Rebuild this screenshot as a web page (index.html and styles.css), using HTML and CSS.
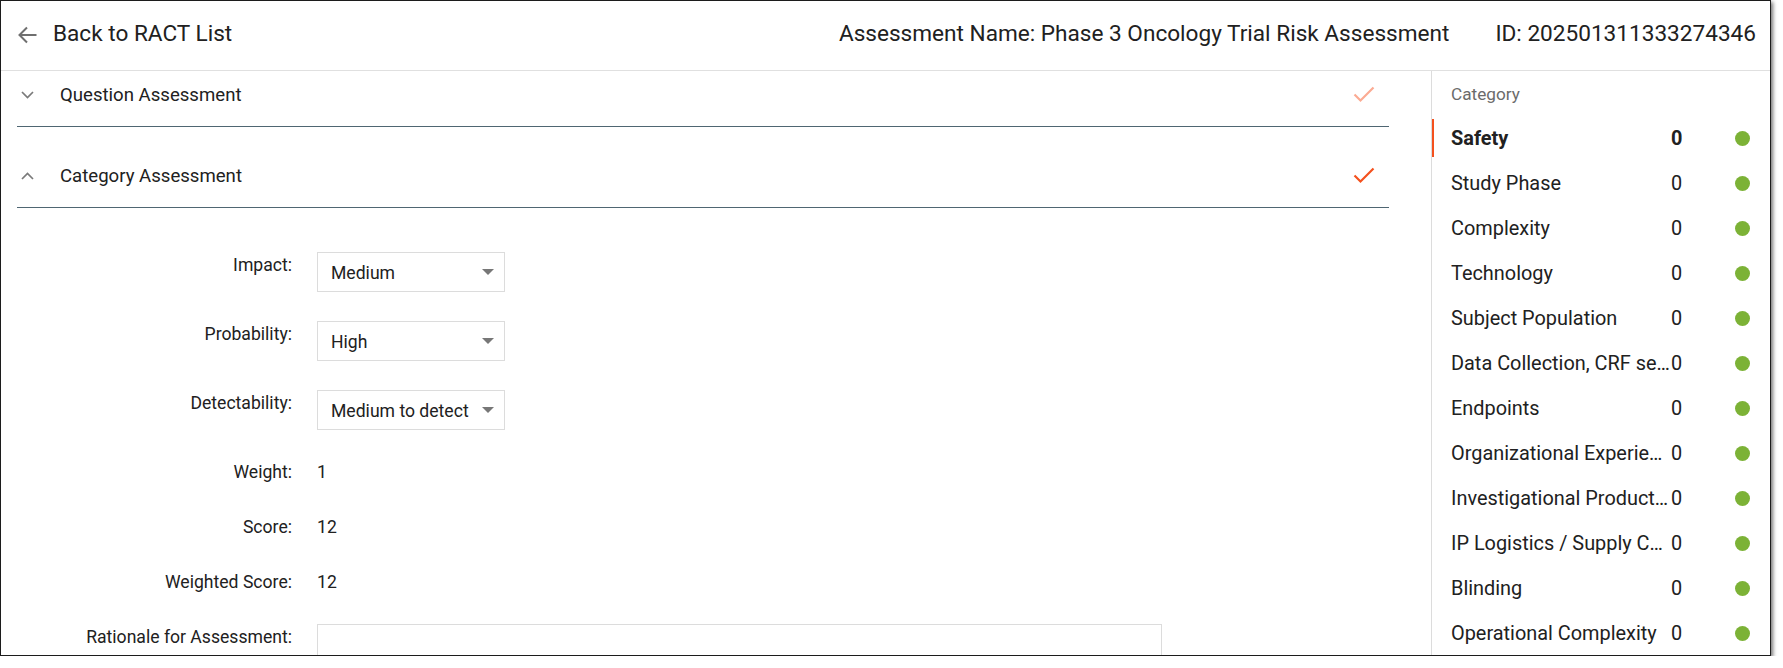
FILE: index.html
```html
<!DOCTYPE html>
<html>
<head>
<meta charset="utf-8">
<title>RACT Assessment</title>
<link rel="stylesheet" href="styles.css">
</head>
<body>
<div class="window">
  <div class="topbar">
    <a class="back">
      <svg class="back-icon" width="20" height="18" viewBox="0 0 20 18"><path d="M19.5 9H2.5M10 1.5L2.5 9L10 16.5" fill="none" stroke="#6f6f6f" stroke-width="2"/></svg>
      <span>Back to RACT List</span>
    </a>
    <div class="meta">
      <span>Assessment Name: Phase 3 Oncology Trial Risk Assessment</span>
      <span>ID: 202501311333274346</span>
    </div>
  </div>

  <div class="main">
    <div class="content">
      <div class="acc">
        <div class="acc-head">
          <svg class="chev" width="13" height="8" viewBox="0 0 13 8"><polyline points="1,1 6.5,6.5 12,1" fill="none" stroke="#7a7a7a" stroke-width="1.7"/></svg>
          <span class="acc-title">Question Assessment</span>
          <svg class="check" width="22" height="17" viewBox="0 0 22 17"><polyline points="1.5,8.5 7.5,14.5 20.5,1.5" fill="none" stroke="#fbab93" stroke-width="2.2"/></svg>
        </div>
      </div>

      <div class="acc open">
        <div class="acc-head">
          <svg class="chev" width="13" height="8" viewBox="0 0 13 8"><polyline points="1,7 6.5,1.5 12,7" fill="none" stroke="#7a7a7a" stroke-width="1.7"/></svg>
          <span class="acc-title">Category Assessment</span>
          <svg class="check" width="22" height="17" viewBox="0 0 22 17"><polyline points="1.5,8.5 7.5,14.5 20.5,1.5" fill="none" stroke="#f4511e" stroke-width="2.2"/></svg>
        </div>
        <div class="acc-body">
          <div class="field">
            <label>Impact:</label>
            <div class="select"><span>Medium</span><i class="caret"></i></div>
          </div>
          <div class="field">
            <label>Probability:</label>
            <div class="select"><span>High</span><i class="caret"></i></div>
          </div>
          <div class="field">
            <label>Detectability:</label>
            <div class="select"><span>Medium to detect</span><i class="caret"></i></div>
          </div>
          <div class="field">
            <label>Weight:</label>
            <div class="value">1</div>
          </div>
          <div class="field">
            <label>Score:</label>
            <div class="value">12</div>
          </div>
          <div class="field">
            <label>Weighted Score:</label>
            <div class="value">12</div>
          </div>
          <div class="field">
            <label>Rationale for Assessment:</label>
            <div class="textarea"></div>
          </div>
        </div>
      </div>
    </div>

    <div class="sidebar">
      <div class="side-title">Category</div>
      <div class="cat active"><span class="cat-name">Safety</span><span class="cat-num">0</span><i class="dot"></i></div>
      <div class="cat"><span class="cat-name">Study Phase</span><span class="cat-num">0</span><i class="dot"></i></div>
      <div class="cat"><span class="cat-name">Complexity</span><span class="cat-num">0</span><i class="dot"></i></div>
      <div class="cat"><span class="cat-name">Technology</span><span class="cat-num">0</span><i class="dot"></i></div>
      <div class="cat"><span class="cat-name">Subject Population</span><span class="cat-num">0</span><i class="dot"></i></div>
      <div class="cat"><span class="cat-name">Data Collection, CRF setup and Data Management</span><span class="cat-num">0</span><i class="dot"></i></div>
      <div class="cat"><span class="cat-name">Endpoints</span><span class="cat-num">0</span><i class="dot"></i></div>
      <div class="cat"><span class="cat-name">Organizational Experience</span><span class="cat-num">0</span><i class="dot"></i></div>
      <div class="cat"><span class="cat-name">Investigational Product Handling</span><span class="cat-num">0</span><i class="dot"></i></div>
      <div class="cat"><span class="cat-name">IP Logistics / Supply Chain</span><span class="cat-num">0</span><i class="dot"></i></div>
      <div class="cat"><span class="cat-name">Blinding</span><span class="cat-num">0</span><i class="dot"></i></div>
      <div class="cat"><span class="cat-name">Operational Complexity</span><span class="cat-num">0</span><i class="dot"></i></div>
      <div class="cat"><span class="cat-name">Site Selection</span><span class="cat-num">0</span><i class="dot"></i></div>
    </div>
  </div>
</div>
</body>
</html>
```

FILE: styles.css
```css
body {
	margin: 0;
	background: #fff;
	font-family: Roboto, "Liberation Sans", sans-serif;
	color: #212121;
}
.window {
	width: 1769px;
	height: 654px;
	border: 1px solid #1c1c1c;
	box-shadow: 2px 2px 4px rgba(0, 0, 0, .55);
	overflow: hidden;
	display: flex;
	flex-direction: column;
}

/* top bar */
.topbar {
	height: 70px;
	flex: none;
	display: flex;
	align-items: center;
	justify-content: space-between;
	border-bottom: 1px solid #e0e0e0;
	font-size: 22.6px;
	padding-bottom: 4px;
	box-sizing: border-box;
}
.back {
	display: flex;
	align-items: center;
	margin-left: 16px;
}
.back-icon {
	margin-right: 16px;
	margin-top: 2px;
}
.meta {
	display: flex;
	gap: 46px;
	margin-right: 14px;
}

.main {
	flex: 1;
	display: flex;
	min-height: 0;
}

/* left side */
.content {
	flex: 1;
	overflow: hidden;
	padding: 0 42px 0 16px;
	font-size: 17.6px;
}
.acc:first-child {
	margin-top: -7px;
}
.acc + .acc {
	margin-top: 18px;
}
.acc-head {
	height: 62px;
	display: flex;
	align-items: center;
	border-bottom: 1px solid #4f6672;
	font-size: 18.6px;
}
.chev {
	margin-left: 4px;
	margin-right: 26px;
}
.acc-title {
	flex: 1;
}
.check {
	margin-right: 14px;
	margin-bottom: 2px;
}
.acc-body {
	padding-top: 44px;
	display: flex;
	flex-direction: column;
	gap: 29px;
}
.field {
	display: flex;
	align-items: flex-start;
}
.field label {
	width: 275px;
	text-align: right;
	line-height: 26px;
	margin-right: 25px;
	flex: none;
}
.select {
	width: 188px;
	height: 40px;
	box-sizing: border-box;
	border: 1px solid #dcdcdc;
	display: flex;
	align-items: center;
	justify-content: space-between;
	padding: 2px 10px 0 13px;
}
.caret {
	width: 0;
	height: 0;
	border-left: 6px solid transparent;
	border-right: 6px solid transparent;
	border-top: 6px solid #777;
	margin-bottom: 3px;
}
.value {
	line-height: 26px;
}
.textarea {
	width: 845px;
	height: 80px;
	box-sizing: border-box;
	border: 1px solid #dcdcdc;
}

/* category list */
.sidebar {
	width: 338px;
	flex: none;
	border-left: 1px solid #dcdcdc;
	padding-top: 11px;
	overflow: hidden;
	font-size: 19.9px;
}
.side-title {
	font-size: 17.2px;
	color: #6b6b6b;
	line-height: 24px;
	padding-left: 19px;
	margin-bottom: 13px;
}
.cat {
	height: 38px;
	margin-bottom: 7px;
	display: flex;
	align-items: center;
	border-left: 2px solid transparent;
	padding-left: 17px;
}
.cat.active {
	border-left-color: #f4511e;
	font-weight: bold;
}
.cat-name {
	width: 219px;
	margin-right: 1px;
	white-space: nowrap;
	overflow: hidden;
	text-overflow: ellipsis;
}
.cat-num {
	width: 64px;
}
.dot {
	width: 15px;
	height: 15px;
	border-radius: 50%;
	background: #7cb236;
}
```
